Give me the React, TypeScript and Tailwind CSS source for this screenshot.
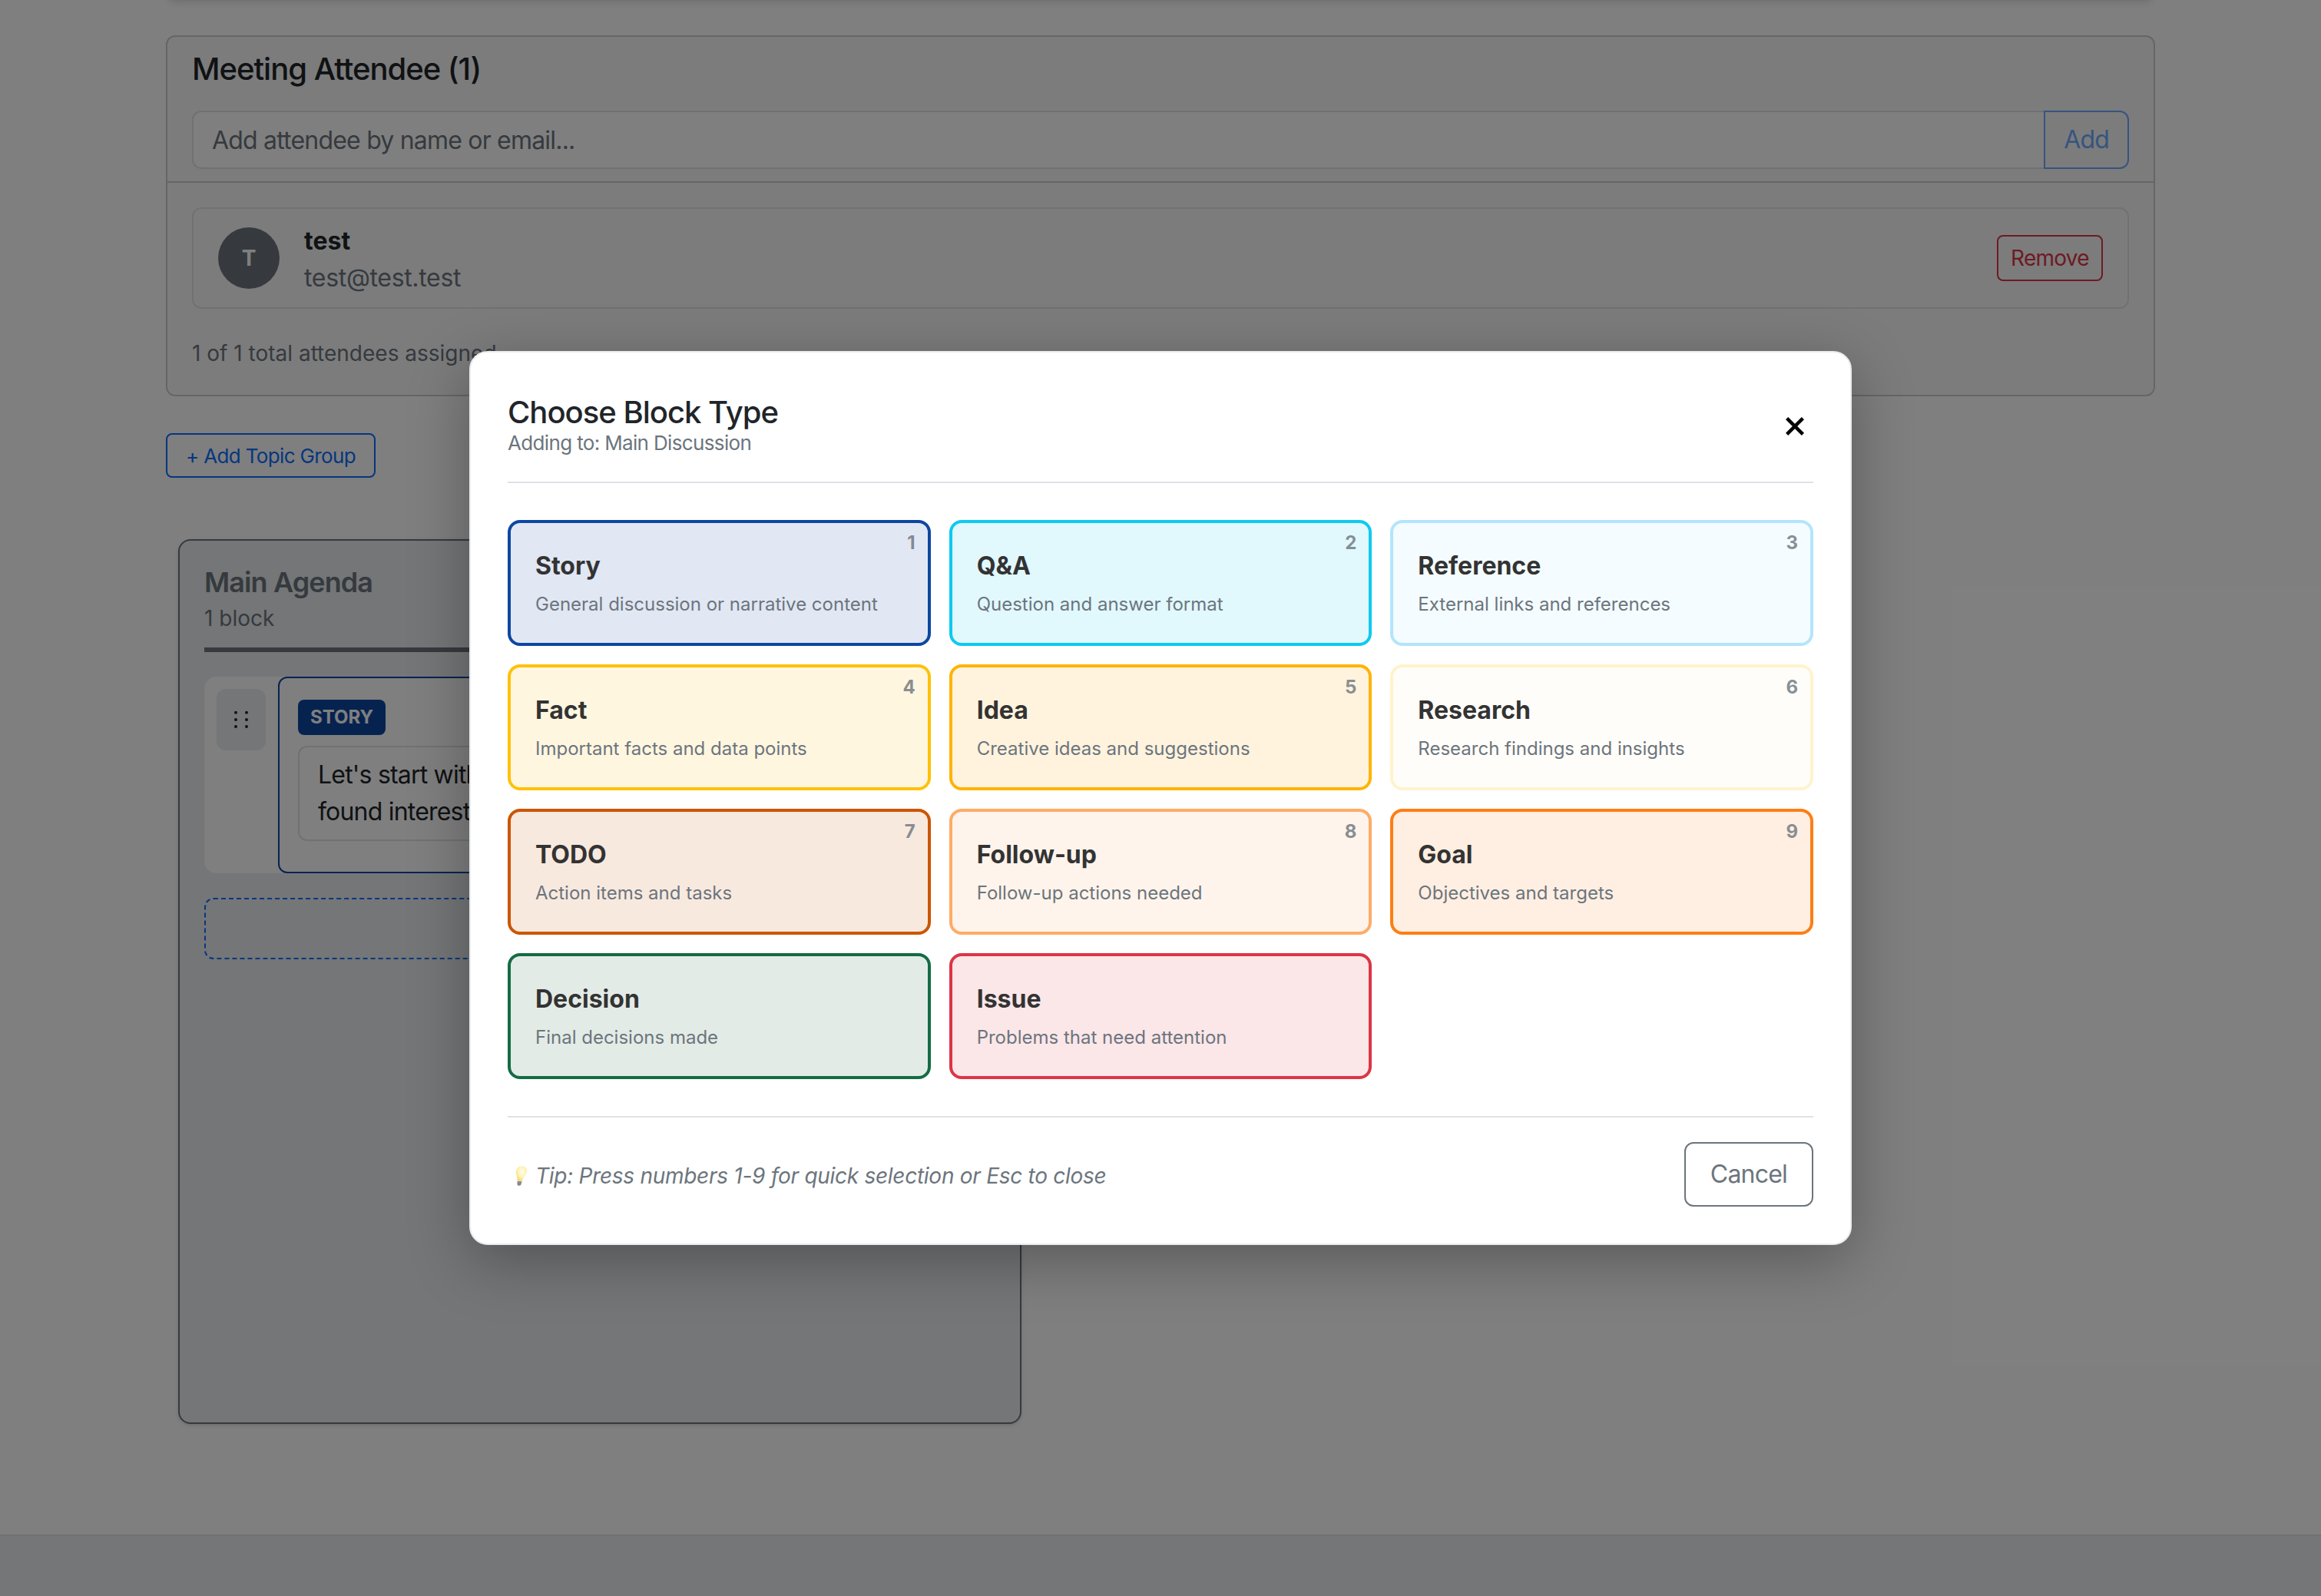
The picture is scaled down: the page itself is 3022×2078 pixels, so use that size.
const blockTypes = [
  { n: 1, title: "Story", desc: "General discussion or narrative content", color: "border-[#0d47a1] bg-[#e1e7f3]" },
  { n: 2, title: "Q&A", desc: "Question and answer format", color: "border-[#0dcaf0] bg-[#e1f8fd]" },
  { n: 3, title: "Reference", desc: "External links and references", color: "border-[#b3e5fc] bg-[#f4fcff]" },
  { n: 4, title: "Fact", desc: "Important facts and data points", color: "border-[#ffc107] bg-[#fff6e0]" },
  { n: 5, title: "Idea", desc: "Creative ideas and suggestions", color: "border-[#ffb300] bg-[#fff3dd]" },
  { n: 6, title: "Research", desc: "Research findings and insights", color: "border-[#fff3cd] bg-[#fffdf9]" },
  { n: 7, title: "TODO", desc: "Action items and tasks", color: "border-[#cc5500] bg-[#f8e9df]" },
  { n: 8, title: "Follow-up", desc: "Follow-up actions needed", color: "border-[#ffab66] bg-[#fff4eb]" },
  { n: 9, title: "Goal", desc: "Objectives and targets", color: "border-[#fd7e14] bg-[#ffefe2]" },
  { title: "Decision", desc: "Final decisions made", color: "border-[#146c43] bg-[#e3ebe6]" },
  { title: "Issue", desc: "Problems that need attention", color: "border-[#dc3545] bg-[#fbe6e8]" },
];

const GripDots = () => (
  <svg viewBox="0 0 12 14" className="h-3.5 w-3" fill="#212529">
    <circle cx="2.5" cy="2.4" r="1" />
    <circle cx="9.5" cy="2.4" r="1" />
    <circle cx="2.5" cy="7" r="1" />
    <circle cx="9.5" cy="7" r="1" />
    <circle cx="2.5" cy="11.5" r="1" />
    <circle cx="9.5" cy="11.5" r="1" />
  </svg>
);

const Bulb = () => (
  <svg viewBox="0 0 14 14" className="mr-1 inline-block h-3.5 w-3.5 align-[-2px]">
    <defs>
      <radialGradient id="glow" cx="0.55" cy="0.4" r="0.6">
        <stop offset="0" stopColor="#fffdf0" />
        <stop offset="0.6" stopColor="#fff3b8" />
        <stop offset="1" stopColor="#f5d76e" />
      </radialGradient>
    </defs>
    <path d="M9.2 0.6C11.6 0.6 12.9 2.4 12.4 4.6C12 6.4 10.2 7.6 9.4 10.4L6.4 10.2C6.4 7.6 5.2 6.2 5.6 4C6 2 7.2 0.6 9.2 0.6Z" fill="url(#glow)" />
    <path d="M6.3 10.4L9.3 10.6L8.7 12.6C8.3 13.6 6.7 13.6 6.2 12.6Z" fill="#8a8a8a" />
  </svg>
);

const BackgroundPage = () => (
  <>
    <main className="flex-1">
      <div className="mx-auto -mt-8.25 mb-6 h-8 w-[1295px] rounded-md shadow-md" />
      <div className="mx-auto w-[1295px]">
        <section className="rounded-md border border-[#ccc] bg-[#f8f9fa]">
          <div className="border-b border-[#ccc] px-4 py-2">
            <h2 className="mb-3.5 text-xl leading-6.5 font-medium tracking-tight text-[#212529]">Meeting Attendee (1)</h2>
            <div className="flex">
              <input
                readOnly
                placeholder="Add attendee by name or email..."
                className="h-9.5 flex-1 rounded-l-md border border-r-0 border-[#dee2e6] bg-white px-3 text-base tracking-tight text-[#212529] placeholder:text-[#6c757d]"
              />
              <button className="rounded-r-md border border-[#6ea8fe] px-3 text-base tracking-tight text-[#6ea8fe]">Add</button>
            </div>
          </div>
          <div className="p-4">
            <div className="flex items-center justify-between rounded-md border border-[#dee2e6] px-4 py-3">
              <div className="flex items-center gap-4">
                <div className="flex h-10 w-10 items-center justify-center rounded-full bg-[#6c757d] text-sm font-bold text-white">T</div>
                <div className="flex h-10 flex-col justify-center pt-0.5 leading-6">
                  <div className="text-base font-bold text-[#212529]">test</div>
                  <div className="text-base tracking-[-0.01em] text-[#6c757d]">test@test.test</div>
                </div>
              </div>
              <button className="rounded border border-[#dc3545] px-2 py-1 text-sm tracking-tight text-[#dc3545]">Remove</button>
            </div>
            <p className="mt-4.5 text-sm leading-5.5 text-[#6c757d]">1 of 1 total attendees assigned</p>
          </div>
        </section>

        <button className="mt-6 flex h-7.25 items-center rounded border border-[#0d6efd] px-3 text-[13px] tracking-tight text-[#0d6efd]">+ Add Topic Group</button>

        <section className="mt-10 ml-2 h-144 w-[549px] rounded-lg border border-[#6c757d] bg-[#e9ecef] px-4 pt-4 shadow-sm">
          <div className="mb-4 border-b-3 border-[#6c757d] pb-1.75">
            <h3 className="text-lg leading-tight font-semibold tracking-tight text-[#6c757d]">Main Agenda</h3>
            <div className="text-sm leading-6 text-[#6c757d]">1 block</div>
          </div>
          <div className="flex gap-2 rounded-lg bg-white pl-2">
            <div className="mt-2 flex h-10 w-8 shrink-0 items-center justify-center rounded-md bg-[#e9ecef]">
              <GripDots />
            </div>
            <div className="flex-1 rounded-md border border-[#0d47a1] px-3 pt-3.5 pb-5">
              <div className="w-fit rounded bg-[#0d47a1] px-2 py-1 text-xs leading-tight font-bold text-white">STORY</div>
              <div className="mt-1.75 rounded-md border border-[#dee2e6] px-3 py-1.5 text-base leading-6 tracking-tight text-[#212529]">
                Let's start with a story of something we
                <br />
                found interesting this week
              </div>
            </div>
          </div>
          <div className="mt-4 h-10 rounded-md border border-dashed border-[#0d6efd]" />
        </section>
      </div>
    </main>
    <footer className="h-10 border-t border-[#dee2e6] bg-[#e9ecef]" />
  </>
);

const ChooseBlockModal = () => (
  <div className="absolute inset-0 flex items-center justify-center bg-black/50">
    <div className="w-[900px] rounded-xl border border-[#e9ecef] bg-white p-6 shadow-[0_10px_40px_rgba(0,0,0,0.3)]">
      <div className="mb-6 flex items-center justify-between border-b border-[#dee2e6] pb-3.75">
        <div>
          <h2 className="text-xl leading-7.5 font-medium tracking-tight text-[#212529]">Choose Block Type</h2>
          <p className="-mt-1.25 text-[13px] leading-5 tracking-tight text-[#6c757d]">Adding to: Main Discussion</p>
        </div>
        <button className="mt-0.75 mr-1.5 text-black">
          <svg viewBox="0 0 12 12" className="h-3 w-3" stroke="currentColor" strokeWidth="2.2">
            <path d="M0.8 0.8L11.2 11.2M11.2 0.8L0.8 11.2" />
          </svg>
        </button>
      </div>

      <div className="grid grid-cols-3 gap-3">
        {blockTypes.map((block) => (
          <button key={block.title} className={`relative rounded-lg border-2 p-4 text-left ${block.color}`}>
            {block.n && <span className="absolute top-1.25 right-2 text-xs font-bold text-[#6c757d] opacity-80">{block.n}</span>}
            <div className="mb-1 text-base leading-6 font-bold text-[#333]">{block.title}</div>
            <div className="text-xs leading-4.5 text-[#6c757d]">{block.desc}</div>
          </button>
        ))}
      </div>

      <div className="mt-6 flex items-center justify-between border-t border-[#dee2e6] pt-4">
        <p className="mt-0.5 text-sm tracking-[-0.01em] text-[#6c757d] italic">
          <Bulb />
          Tip: Press numbers 1-9 for quick selection or Esc to close
        </p>
        <button className="rounded-md border border-[#6c757d] px-4 py-2 text-base tracking-tight text-[#6c757d]">Cancel</button>
      </div>
    </div>
  </div>
);

export default function App() {
  return (
    <div className="h-screen overflow-hidden">
      {/* reference was shot at 2x, so the whole page is drawn at that zoom */}
      <div className="relative flex h-full flex-col overflow-hidden bg-white font-['Inter',sans-serif] [zoom:2]">
        <BackgroundPage />
        <ChooseBlockModal />
      </div>
    </div>
  );
}
